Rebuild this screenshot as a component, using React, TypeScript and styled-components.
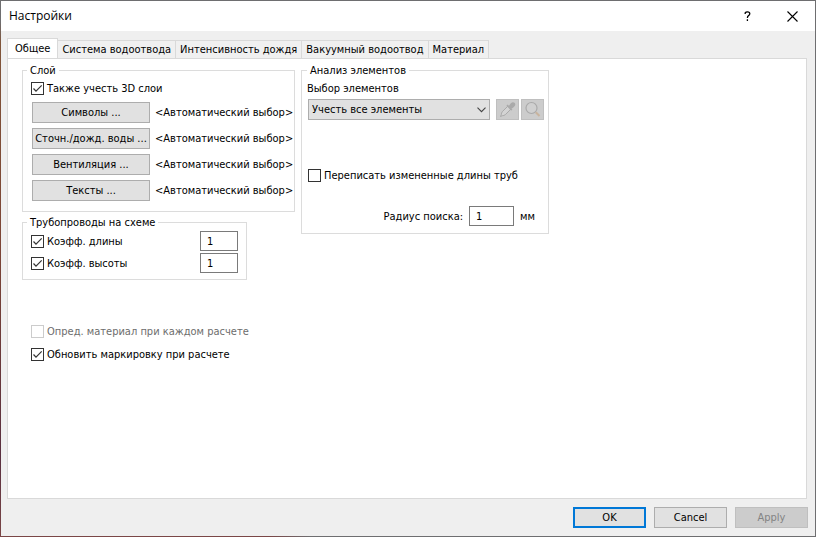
import React, { useState } from "react";
import styled, { createGlobalStyle } from "styled-components";

const GlobalStyle = createGlobalStyle`
  *, *::before, *::after { box-sizing: border-box; }
  body { margin: 0; background: #efefef; }
  body, button, input, select {
    font-family: "DejaVu Sans Condensed", Tahoma, "Noto Sans", sans-serif;
    font-size: 11px;
    line-height: 13px;
    color: #000;
  }
`;

const Window = styled.div`
  display: flex;
  flex-direction: column;
  min-height: 100vh;
  border: 1px solid transparent;
  background:
    linear-gradient(#efefef, #efefef) padding-box,
    linear-gradient(#6e6e70 4%, #80553a 8%, #7d4636 45%, #5a3040 85%, #7a4646) left / 1px 100% no-repeat border-box,
    linear-gradient(to right, #7a4646 33%, #6e6e70 38%) bottom / 100% 1px no-repeat border-box,
    linear-gradient(#6e6e70, #6e6e70) border-box;
`;

const TitleBar = styled.header`
  display: flex;
  align-items: center;
  height: 30px;
  padding-left: 8px;
  background: #fff;
`;

const Title = styled.h1`
  flex: 1;
  margin: 0;
  font: 12px/16px "Open Sans", "Noto Sans", sans-serif;
`;

const CaptionButton = styled.button`
  display: grid;
  place-items: center;
  width: 45px;
  height: 30px;
  padding: 0;
  border: 0;
  background: none;
`;

const TabBar = styled.nav`
  display: flex;
  align-items: flex-end;
  height: 27px;
  padding: 0 6px;
`;

const Tab = styled.button<{ $active?: boolean }>`
  height: ${(p) => (p.$active ? 21 : 18)}px;
  margin-bottom: ${(p) => (p.$active ? -1 : 0)}px;
  padding: ${(p) => (p.$active ? "0 7px 1px" : "0 4px")};
  border: 1px solid #d9d9d9;
  border-bottom: 0;
  border-left-width: ${(p) => (p.$active ? 1 : 0)}px;
  background: ${(p) => (p.$active ? "#fff" : "#f0f0f0")};
  white-space: nowrap;
`;

const Page = styled.main`
  flex: 1;
  display: flex;
  align-items: flex-start;
  gap: 6px;
  margin: 0 8px 0 6px;
  padding: 5px 14px;
  border: 1px solid #d9d9d9;
  background: #fff;
`;

const Column = styled.div`
  display: flex;
  flex-direction: column;
  align-items: flex-start;
`;

const Legend = styled.legend`
  margin-left: -4px;
  padding: 0 3px;
`;

const Group = styled.fieldset<{ $width: number }>`
  width: ${(p) => p.$width}px;
  min-width: 0;
  margin: 0 0 4px;
  padding: 4px 4px 10px 8px;
  border: 1px solid #dcdcdc;
`;

const CheckLabel = styled.label<{ $disabled?: boolean }>`
  display: flex;
  align-items: center;
  gap: 3px;
  height: 14px;
  color: ${(p) => (p.$disabled ? "#6d6d6d" : "#000")};
  white-space: nowrap;
`;

const Stack = styled.span`
  display: grid;
  align-items: center;
  > * { grid-area: 1 / 1; }
  > svg { pointer-events: none; justify-self: end; }
`;

const CheckInput = styled.input`
  appearance: none;
  width: 13px;
  height: 13px;
  margin: 0;
  border: 1px solid #333;
  background: #fff;
  &:disabled { border-color: #ccc; }
`;

const Button = styled.button`
  height: 21px;
  padding: 0;
  border: 1px solid #adadad;
  background: #e1e1e1;
  white-space: nowrap;
  &:disabled { border-color: #bfbfbf; background: #ccc; color: #838383; }
`;

const LayerGrid = styled.div`
  display: grid;
  grid-template-columns: 118px auto;
  align-items: center;
  gap: 5px;
  margin: 7px 0 0 1px;
  white-space: nowrap;
`;

const FactorRow = styled.div`
  display: flex;
  align-items: center;
  justify-content: space-between;
  height: 20px;
  margin: 0 4px 2px 0;
`;

const NumberInput = styled.input<{ $width: number }>`
  width: ${(p) => p.$width}px;
  height: 20px;
  padding: 0 6px;
  border: 1px solid #7a7a7a;
  background: #fff;
`;

const FactorGroup = styled(Group)`
  padding: 2px 4px 4px 8px;
`;

const Options = styled.div`
  display: flex;
  flex-direction: column;
  gap: 9px;
  margin: 40px 0 0 9px;
`;

const AnalysisGroup = styled(Group)`
  padding: 5px 4px 7px 5px;
  > legend { margin-left: 0; }
`;

const PickerRow = styled.div`
  display: flex;
  gap: 2px;
  margin: 4px 0 48px 1px;
`;

const Select = styled.select`
  appearance: none;
  width: 182px;
  height: 21px;
  padding: 0 20px 0 3px;
  border: 1px solid #adadad;
  border-radius: 0;
  background: #e1e1e1;
`;

const PickerSelect = styled(Stack)`
  margin-right: 4px;
  > svg { margin-right: 4px; }
`;

const IconButton = styled(Button)`
  display: grid;
  place-items: center;
  width: 23px;
`;

const OverwriteRow = styled.div`
  margin: 0 0 24px 1px;
`;

const RadiusRow = styled.label`
  display: flex;
  align-items: center;
  justify-content: flex-end;
  gap: 6px;
  padding-right: 9px;
`;

const Footer = styled.footer`
  display: flex;
  justify-content: flex-end;
  gap: 8px;
  padding: 8px 7px;
`;

const FooterButton = styled(Button)<{ $primary?: boolean }>`
  width: 73px;
  border: ${(p) => (p.$primary ? "2px solid #0078d7" : "1px solid #adadad")};
`;

function Check({ label, initial = false, disabled = false }: { label: string; initial?: boolean; disabled?: boolean }) {
  const [on, setOn] = useState(initial);
  return (
    <CheckLabel $disabled={disabled}>
      <Stack>
        <CheckInput type="checkbox" checked={on} disabled={disabled} onChange={() => setOn(!on)} />
        {on && (
          <svg width="13" height="13" fill="none" stroke="#333" strokeWidth="1.2">
            <path d="M2.5 6.5 5 9.2 10.7 3.4" />
          </svg>
        )}
      </Stack>
      {label}
    </CheckLabel>
  );
}

const tabs = ["Общее", "Система водоотвода", "Интенсивность дождя", "Вакуумный водоотвод", "Материал"];
const layers = ["Символы ...", "Сточн./дожд. воды ...", "Вентиляция ...", "Тексты ..."];

export default function App() {
  const [active, setActive] = useState(0);
  return (
    <>
      <GlobalStyle />
      <Window>
        <TitleBar>
          <Title>Настройки</Title>
          <CaptionButton aria-label="Справка">
            <svg width="7" height="10" fill="none" stroke="#000" strokeWidth="1.3">
              <path d="M1.2 3V1.8Q1.8.8 3.5.8 5.8.8 5.8 2.8 5.8 3.8 4.5 4.6 3.4 5.3 3.4 7M3.4 8.3V10" />
            </svg>
          </CaptionButton>
          <CaptionButton aria-label="Закрыть">
            <svg width="11" height="11" fill="none" stroke="#000" strokeWidth="1.1">
              <path d="M.5.5l10 10M10.5.5l-10 10" />
            </svg>
          </CaptionButton>
        </TitleBar>
        <TabBar role="tablist">
          {tabs.map((t, i) => (
            <Tab key={t} role="tab" aria-selected={i === active} $active={i === active} onClick={() => setActive(i)}>
              {t}
            </Tab>
          ))}
        </TabBar>
        <Page>
          <Column>
            <Group $width={273}>
              <Legend>Слой</Legend>
              <Check label="Также учесть 3D слои" initial />
              <LayerGrid>
                {layers.map((l) => (
                  <React.Fragment key={l}>
                    <Button>{l}</Button>
                    <span>&lt;Автоматический выбор&gt;</span>
                  </React.Fragment>
                ))}
              </LayerGrid>
            </Group>
            <FactorGroup $width={225}>
              <Legend>Трубопроводы на схеме</Legend>
              {["Коэфф. длины", "Коэфф. высоты"].map((l) => (
                <FactorRow key={l}>
                  <Check label={l} initial />
                  <NumberInput $width={38} defaultValue="1" aria-label={l} />
                </FactorRow>
              ))}
            </FactorGroup>
            <Options>
              <Check label="Опред. материал при каждом расчете" disabled />
              <Check label="Обновить маркировку при расчете" initial />
            </Options>
          </Column>
          <AnalysisGroup $width={248}>
            <Legend>Анализ элементов</Legend>
            <label htmlFor="picker">Выбор элементов</label>
            <PickerRow>
              <PickerSelect>
                <Select id="picker">
                  <option>Учесть все элементы</option>
                </Select>
                <svg width="9" height="6" fill="none" stroke="#444" strokeWidth="1.1">
                  <path d="M.5.7l4 4 4-4" />
                </svg>
              </PickerSelect>
              <IconButton disabled aria-label="Пипетка">
                <svg width="17" height="17" fill="none" stroke="#aaa">
                  <path d="M9 5 3.3 10.7Q2.3 12 2.3 13.7L1.5 15.5 3.3 14.7Q5 14.7 6.3 13.7L12 8" fill="#d4d4d4" />
                  <path d="M8 4.2 12.8 9M10.5 5.5 12.2 3.2Q13.8 1.3 15.2 2.7 16 4 14 5.5L12 7Z" fill="#aaa" strokeWidth="1.8" />
                </svg>
              </IconButton>
              <IconButton disabled aria-label="Поиск">
                <svg width="17" height="17" fill="none" stroke="#aaa">
                  <circle cx="7.5" cy="7" r="5.5" fill="#d0d0d0" strokeWidth="1.2" />
                  <path d="M11.8 11.3 15.5 15" stroke="#c9b49e" strokeWidth="2" />
                </svg>
              </IconButton>
            </PickerRow>
            <OverwriteRow>
              <Check label="Переписать измененные длины труб" />
            </OverwriteRow>
            <RadiusRow>
              Радиус поиска:
              <NumberInput $width={45} defaultValue="1" />
              мм
            </RadiusRow>
          </AnalysisGroup>
        </Page>
        <Footer>
          <FooterButton $primary>OK</FooterButton>
          <FooterButton>Cancel</FooterButton>
          <FooterButton disabled>Apply</FooterButton>
        </Footer>
      </Window>
    </>
  );
}
